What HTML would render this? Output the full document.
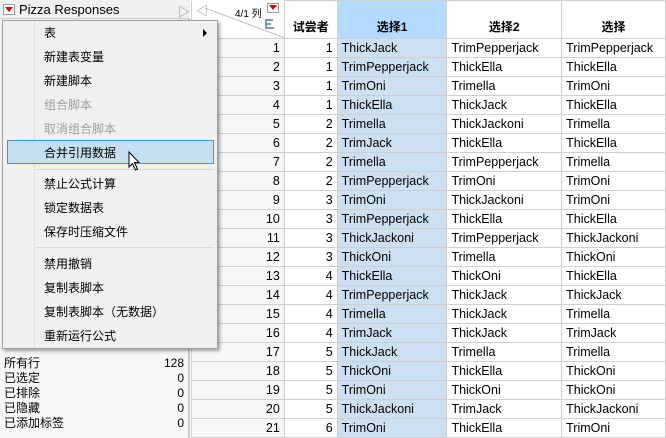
<!DOCTYPE html><html><head><meta charset="utf-8"><style>
*{margin:0;padding:0;box-sizing:border-box}
body{width:666px;height:438px;overflow:hidden;background:#fff;font-family:"Liberation Sans","Noto Sans CJK SC",sans-serif;font-size:12px;color:#000;position:relative}
.abs{position:absolute}
table{border-collapse:collapse;position:absolute;left:191px;top:0;table-layout:fixed}
td{height:19px;border:1px solid #cfcfcf;padding:0 4px;white-space:nowrap;overflow:hidden;font-size:12.5px}
td.n{text-align:right;background:#f7f7f7}
td.r{text-align:right}
td.s{background:#cde0f1}
tr.h td{height:38px;vertical-align:bottom;padding-bottom:3px;font-weight:bold;text-align:center;background:#fff;font-size:12px}
tr.h td.s{background:#b4dbfd}
.menu{position:absolute;left:2px;top:20px;width:216px;height:329px;background:#f0f0f0;border:1px solid #a0a0a0;box-shadow:2px 2px 3px rgba(0,0,0,.35)}
.mi{position:absolute;left:41px;font-size:12px}
.dis{color:#a0a0a0}
.sep{position:absolute;left:33px;width:178px;height:1px;background:#d8d8d8}
</style></head><body>
<div class="abs" style="left:0;top:0;width:190px;height:438px;background:#f3f3f3;border-right:2px solid #c8c8c8"></div>
<div class="abs" style="left:0;top:0;width:190px;height:19px;background:#f0f0f0;border-bottom:1px solid #ccc"></div>
<div class="abs" style="left:3px;top:4px;width:12px;height:11px;border:1px solid #999;background:#fff"></div>
<div class="abs" style="left:5px;top:7px;width:0;height:0;border-left:4px solid transparent;border-right:4px solid transparent;border-top:5px solid #d00"></div>
<div class="abs" style="left:19px;top:2px;font-size:13px">Pizza Responses</div>
<div class="abs" style="left:178px;top:3px;color:#888;font-size:12px">▷</div>
<div class="abs" style="left:1px;top:325px;font-size:12px">☐行</div>
<div class="abs" style="left:0;top:355px;width:188px;height:83px;background:#f7f7f7"></div>
<div class="abs" style="left:4px;top:356px;line-height:15px;font-size:12px">所有行<br>已选定<br>已排除<br>已隐藏<br>已添加标签</div>
<div class="abs" style="left:150px;top:356px;width:34px;text-align:right;line-height:15px;font-size:12px">128<br>0<br>0<br>0<br>0</div>
<table>
<colgroup><col style="width:94px"><col style="width:53px"><col style="width:110px"><col style="width:115px"><col style="width:104px"></colgroup>
<tr class="h"><td style="background:#fff;border-top:none"></td><td>试尝者</td><td class="s">选择1</td><td>选择2</td><td>选择</td></tr>
<tr><td class="n">1</td><td class="r">1</td><td class="s">ThickJack</td><td>TrimPepperjack</td><td>TrimPepperjack</td></tr>
<tr><td class="n">2</td><td class="r">1</td><td class="s">TrimPepperjack</td><td>ThickElla</td><td>ThickElla</td></tr>
<tr><td class="n">3</td><td class="r">1</td><td class="s">TrimOni</td><td>Trimella</td><td>TrimOni</td></tr>
<tr><td class="n">4</td><td class="r">1</td><td class="s">ThickElla</td><td>ThickJack</td><td>ThickElla</td></tr>
<tr><td class="n">5</td><td class="r">2</td><td class="s">Trimella</td><td>ThickJackoni</td><td>Trimella</td></tr>
<tr><td class="n">6</td><td class="r">2</td><td class="s">TrimJack</td><td>ThickElla</td><td>ThickElla</td></tr>
<tr><td class="n">7</td><td class="r">2</td><td class="s">Trimella</td><td>TrimPepperjack</td><td>Trimella</td></tr>
<tr><td class="n">8</td><td class="r">2</td><td class="s">TrimPepperjack</td><td>TrimOni</td><td>TrimOni</td></tr>
<tr><td class="n">9</td><td class="r">3</td><td class="s">TrimOni</td><td>ThickJackoni</td><td>TrimOni</td></tr>
<tr><td class="n">10</td><td class="r">3</td><td class="s">TrimPepperjack</td><td>ThickElla</td><td>ThickElla</td></tr>
<tr><td class="n">11</td><td class="r">3</td><td class="s">ThickJackoni</td><td>TrimPepperjack</td><td>ThickJackoni</td></tr>
<tr><td class="n">12</td><td class="r">3</td><td class="s">ThickOni</td><td>Trimella</td><td>ThickOni</td></tr>
<tr><td class="n">13</td><td class="r">4</td><td class="s">ThickElla</td><td>ThickOni</td><td>ThickElla</td></tr>
<tr><td class="n">14</td><td class="r">4</td><td class="s">TrimPepperjack</td><td>ThickJack</td><td>ThickJack</td></tr>
<tr><td class="n">15</td><td class="r">4</td><td class="s">Trimella</td><td>ThickJack</td><td>Trimella</td></tr>
<tr><td class="n">16</td><td class="r">4</td><td class="s">TrimJack</td><td>ThickJack</td><td>TrimJack</td></tr>
<tr><td class="n">17</td><td class="r">5</td><td class="s">ThickJack</td><td>Trimella</td><td>Trimella</td></tr>
<tr><td class="n">18</td><td class="r">5</td><td class="s">ThickOni</td><td>ThickElla</td><td>ThickOni</td></tr>
<tr><td class="n">19</td><td class="r">5</td><td class="s">TrimOni</td><td>ThickOni</td><td>ThickOni</td></tr>
<tr><td class="n">20</td><td class="r">5</td><td class="s">ThickJackoni</td><td>TrimJack</td><td>ThickJackoni</td></tr>
<tr><td class="n">21</td><td class="r">6</td><td class="s">TrimOni</td><td>ThickElla</td><td>TrimOni</td></tr>
</table>
<svg class="abs" style="left:205px;top:8px" width="80" height="32"><line x1="0" y1="0" x2="80" y2="30" stroke="#bbb"/><g fill="#7a9ab0"><rect x="60" y="11" width="2" height="10"/><rect x="62" y="11" width="6" height="2"/><rect x="62" y="15" width="4" height="2"/><rect x="62" y="19" width="7" height="2"/></g></svg>
<div class="abs" style="left:196px;top:2px;color:#888;font-size:12px">◁</div>
<div class="abs" style="left:235px;top:5px;font-size:10px">4/1 列</div>
<div class="abs" style="left:267px;top:3px;width:12px;height:10px;border:1px solid #999;background:#fff"></div>
<div class="abs" style="left:269px;top:5px;width:0;height:0;border-left:4px solid transparent;border-right:4px solid transparent;border-top:5px solid #d00"></div>
<div class="menu">
<div class="abs" style="left:31px;top:0;width:1px;height:327px;background:#fff;border-left:1px solid #ddd"></div>
<div class="mi" style="top:3px">表</div><div class="abs" style="left:200px;top:8px;border-top:4px solid transparent;border-bottom:4px solid transparent;border-left:4px solid #000"></div>
<div class="mi" style="top:27px">新建表变量</div>
<div class="mi" style="top:51px">新建脚本</div>
<div class="mi dis" style="top:75px">组合脚本</div>
<div class="mi dis" style="top:99px">取消组合脚本</div>
<div class="abs" style="left:4px;top:119px;width:207px;height:24px;background:#c4e0f0;border:1px solid #3a9ad9"></div>
<div class="mi" style="top:123px">合并引用数据</div>
<div class="sep" style="top:148px"></div>
<div class="mi" style="top:154px">禁止公式计算</div>
<div class="mi" style="top:178px">锁定数据表</div>
<div class="mi" style="top:202px">保存时压缩文件</div>
<div class="sep" style="top:226px"></div>
<div class="mi" style="top:234px">禁用撤销</div>
<div class="mi" style="top:258px">复制表脚本</div>
<div class="mi" style="top:282px">复制表脚本（无数据）</div>
<div class="mi" style="top:306px">重新运行公式</div>
</div>
<svg class="abs" style="left:128px;top:151px" width="14" height="22"><path d="M1 1 L1 16 L4.5 12.5 L7.5 19 L9.5 18 L6.5 11.5 L11 11.5 Z" fill="#fff" stroke="#000" stroke-width="1"/></svg>
</body></html>
